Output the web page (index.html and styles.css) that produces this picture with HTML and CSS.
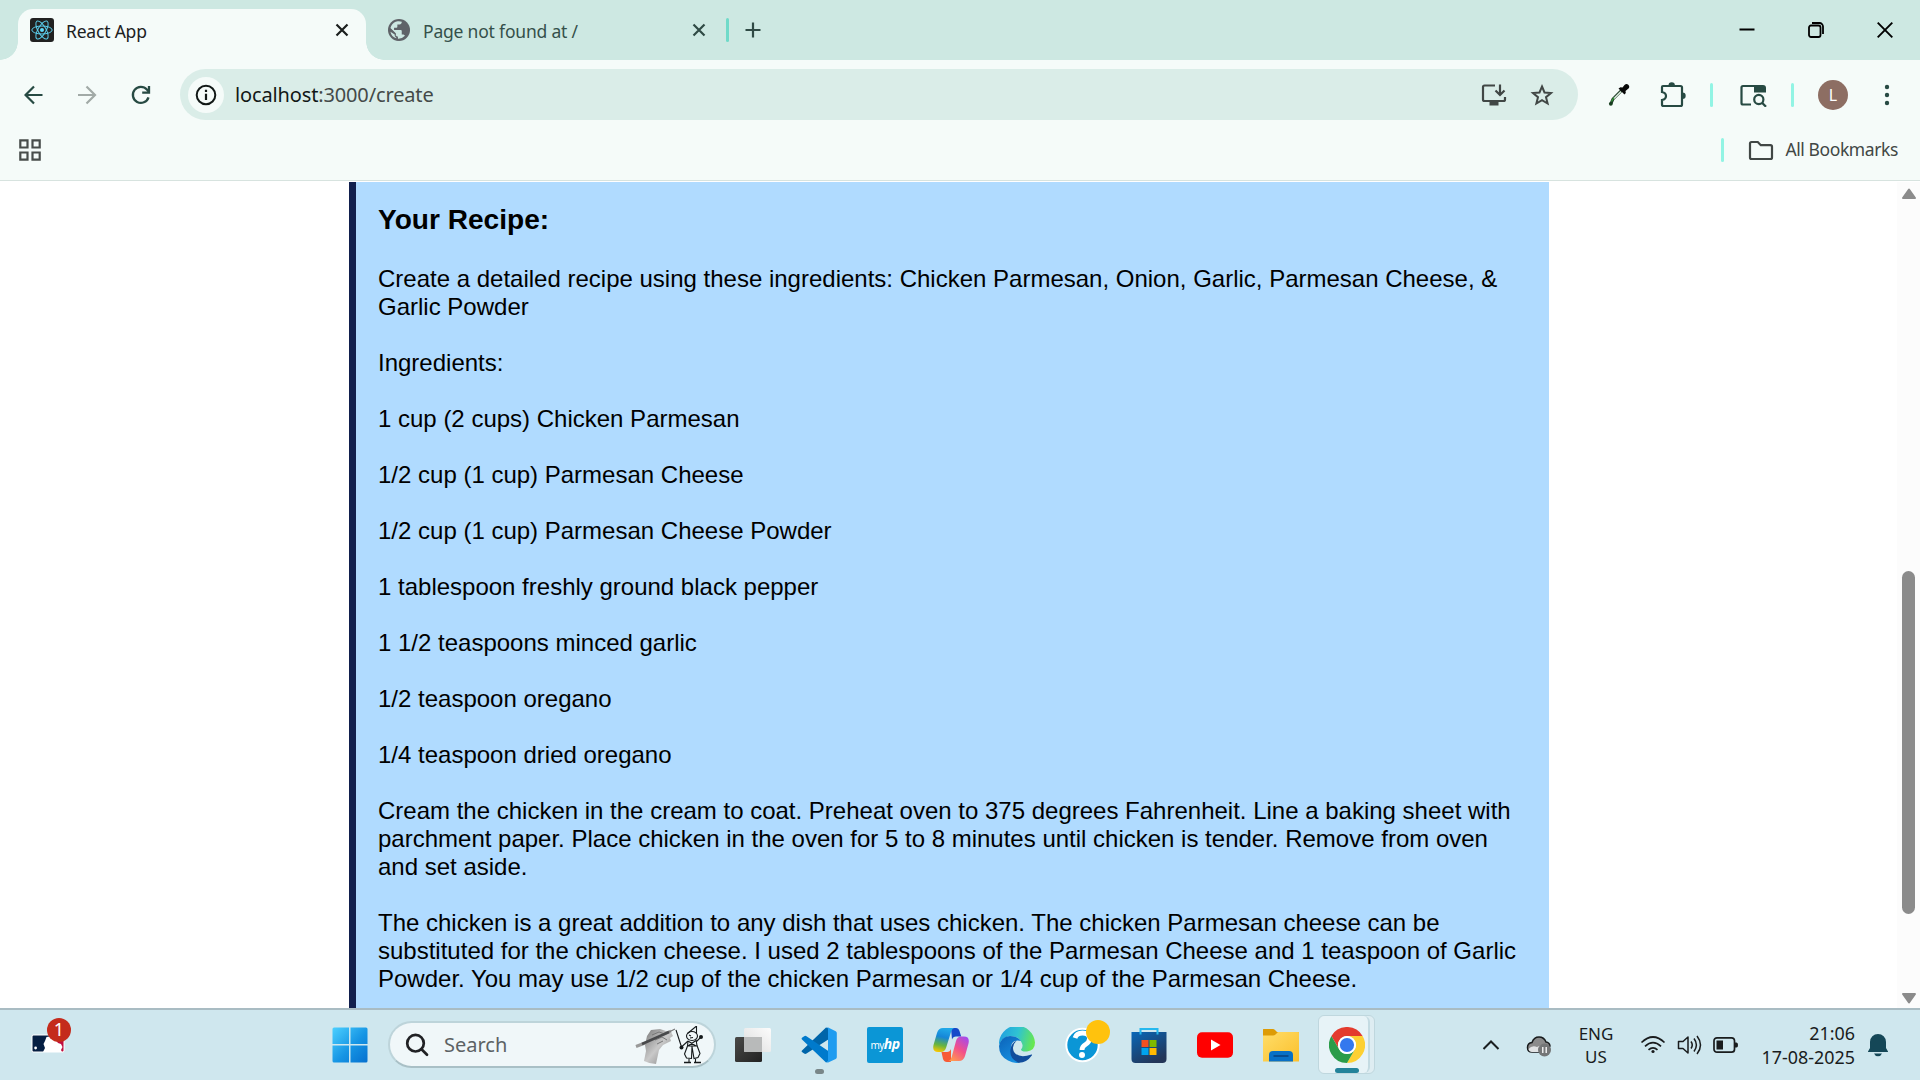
FILE: index.html
```html
<!DOCTYPE html>
<html lang="en">
<head>
<meta charset="utf-8">
<title>React App</title>
<link rel="stylesheet" href="styles.css">
</head>
<body>
<div class="screen">
  <header class="tabstrip">
    <div class="tab tab-active">
      <svg class="favicon" width="24" height="24" viewBox="0 0 24 24"><rect width="24" height="24" rx="3" fill="#212121"/><g fill="none" stroke="#5ccfee" stroke-width="1"><ellipse cx="12" cy="12" rx="10.2" ry="4"/><ellipse cx="12" cy="12" rx="10.2" ry="4" transform="rotate(60 12 12)"/><ellipse cx="12" cy="12" rx="10.2" ry="4" transform="rotate(120 12 12)"/></g><circle cx="12" cy="12" r="2" fill="#61dafb"/></svg>
      <span class="tab-title t-react">React App</span>
      <svg class="tab-close" width="14" height="14" viewBox="0 0 14 14"><path d="M1.500 1.500l11 11M12.500 1.500l-11 11" stroke="#1b1f1e" stroke-width="2.200"/></svg>
    </div>
    <div class="tab tab-idle">
      <svg class="favicon globe" width="22" height="22" viewBox="2 2 20 20"><circle cx="12" cy="12" r="10" fill="#5f6368"/><path fill="#cde8e2" d="M4 12.200l5 4.600v1c0 .8.700 1.500 1.500 1.500v.6A8 8 0 0 1 4 12.200z"/><path fill="#cde8e2" d="M4 12A8 8 0 0 1 14.500 4.400V5c0 1-.9 2-2 2h-2v2c0 .6-.4 1-1 1h-2v2h6c.6 0 1 .4 1 1v3h1c.9 0 1.600.5 1.900 1.300A8 8 0 0 1 11 20v-2c-1 0-2-.9-2-2v-1L4.200 10.200z"/><path fill="#5f6368" d="M3.200 9.800L9 15.400v1.600c0 1 .9 2 2 2v2.500A9.500 9.500 0 0 1 3.200 9.800z"/><path fill="#cde8e2" d="M4.200 13.500a8 8 0 0 0 5.300 6l-.1-.7c-.8-.4-1.300-1.200-1.300-2v-.6z"/></svg>
      <span class="tab-title t-page">Page not found at /</span>
      <svg class="tab-close" width="14" height="14" viewBox="0 0 14 14"><path d="M1.500 1.500l11 11M12.500 1.500l-11 11" stroke="#2f4a45" stroke-width="2.200"/></svg>
    </div>
    <i class="divider teal"></i>
    <svg class="plus" width="16" height="16" viewBox="0 0 16 16"><path d="M8 0.500v15M.5 8h15" stroke="#2f4a45" stroke-width="2.200"/></svg>
    <div class="window-controls">
      <svg width="16" height="16" viewBox="0 0 16 16"><path d="M.5 7.500h15" stroke="#000" stroke-width="2"/></svg>
      <svg width="16" height="16" viewBox="0 0 16 16" fill="none" stroke="#000" stroke-width="1.800"><rect x="1" y="3.500" width="11.500" height="11.500" rx="2"/><path d="M4 1h7.500a3.500 3.500 0 0 1 3.500 3.500V12"/></svg>
      <svg width="16" height="16" viewBox="0 0 16 16"><path d="M.7.700l14.600 14.600M15.300.700L.7 15.300" stroke="#000" stroke-width="1.900"/></svg>
    </div>
  </header>

  <div class="toolbar">
    <div class="nav">
      <svg width="20" height="20" viewBox="0 0 20 20" fill="none" stroke="#274a43" stroke-width="2.200"><path d="M18.500 10H1.500M10 1.500L1.500 10l8.500 8.500"/></svg>
      <svg width="20" height="20" viewBox="0 0 20 20" fill="none" stroke="#a2aaa7" stroke-width="2.200"><path d="M1 10h17M9.500 1.500L18 10l-8.500 8.500"/></svg>
      <svg width="20" height="20" viewBox="0 0 20 20" fill="none" stroke="#274a43" stroke-width="2.300"><path d="M17.500 12.300A8 8 0 1 1 15.900 4.600L18 7"/><path d="M18 1v6.600h-6.800"/></svg>
    </div>
    <div class="omnibox">
      <div class="site-info"><svg width="22" height="22" viewBox="0 0 22 22"><circle cx="11" cy="11" r="9.300" fill="none" stroke="#111816" stroke-width="2"/><path d="M11 9.700v6.300M11 5.700v2.200" stroke="#111816" stroke-width="2.200"/></svg></div>
      <span class="url"><b>localhost</b>:3000/create</span>
      <svg class="install" width="26" height="24" viewBox="0 0 26 24" fill="none" stroke="#414745" stroke-width="2.200"><path d="M14 2.500H3.500a1.500 1.500 0 0 0-1.500 1.500v12.500A1.500 1.500 0 0 0 3.500 18h19a1.500 1.500 0 0 0 1.500-1.500V14M19 1.500V12M14.500 7.500L19 12l4.500-4.500"/><path d="M8.500 20.500h9" stroke-width="4"/></svg>
      <svg class="star" width="24" height="24" viewBox="0 0 24 24"><path d="M12 3.500l2.500 6 6.500.5-5 4.200 1.600 6.300L12 17.100l-5.600 3.400L8 14.200 3 10l6.500-.5z" fill="none" stroke="#414745" stroke-width="2"/></svg>
    </div>
    <div class="extensions">
      <svg width="22" height="24" viewBox="0 0 22 24"><path d="M14 7L5 16 2.800 21" stroke="#1d3a25" stroke-width="3" fill="none"/><path d="M13 8.500L6 15.500" stroke="#d8eadb" stroke-width="1.600"/><path d="M10.500 5.500l2-1.200 2 .3 2-2.600q2-1.800 3.800-.2t.2 3.800L17.500 8l.3 2-1.300 1.500z" fill="#080908"/><circle cx="2.800" cy="20.800" r="1.900" fill="#173e1f"/><path d="M6 14.500l-2.500 4" stroke="#39a13e" stroke-width="1.200"/></svg>
      <svg width="26" height="26" viewBox="0 0 26 26"><path d="M3 4h17.500A1.500 1.500 0 0 1 22 5.500v17a1.500 1.500 0 0 1-1.500 1.500h-17A1.500 1.500 0 0 1 2 22.500V18q4-.8 4-4t-4-4V5a1 1 0 0 1 1-1z" fill="none" stroke="#274a43" stroke-width="2.200"/><path d="M8.500 3.500a3.200 3.200 0 0 1 6.400 0zM22.500 10.500a3.200 3.200 0 0 1 0 6.400z" fill="#274a43"/></svg>
      <i class="divider mint"></i>
      <svg width="28" height="24" viewBox="0 0 28 24"><path d="M12 21.500H4a1.500 1.500 0 0 1-1.500-1.500V4.500A1.500 1.500 0 0 1 4 3h20" fill="none" stroke="#274a43" stroke-width="2.200"/><path d="M15 2h9a3 3 0 0 1 3 3v4.500H15z" fill="#274a43"/><circle cx="19.800" cy="16.500" r="4.600" fill="none" stroke="#274a43" stroke-width="2.200"/><path d="M23 19.700l4 4" stroke="#274a43" stroke-width="2.300"/></svg>
      <i class="divider mint"></i>
      <span class="avatar">L</span>
      <svg width="6" height="24" viewBox="0 0 6 24" fill="#274a43"><circle cx="3" cy="4" r="2.200"/><circle cx="3" cy="12" r="2.200"/><circle cx="3" cy="20" r="2.200"/></svg>
    </div>
  </div>

  <div class="bookmarks">
    <svg width="24" height="24" viewBox="0 0 24 24" fill="none" stroke="#484d4b" stroke-width="2.200"><path d="M2.300 2.300h7.200v7.200H2.300zM14.500 2.300h7.200v7.200h-7.200zM2.300 14.500h7.200v7.200H2.300zM14.500 14.500h7.200v7.200h-7.200z"/></svg>
    <div class="all-bookmarks">
      <i class="divider mint"></i>
      <svg width="26" height="22" viewBox="0 0 26 22"><path d="M3.500 3h6.300l3 3.200h9.700A1.500 1.500 0 0 1 24 7.700v10.800a1.500 1.500 0 0 1-1.500 1.500h-19A1.500 1.500 0 0 1 2 18.500v-14A1.500 1.500 0 0 1 3.500 3z" fill="none" stroke="#414745" stroke-width="2.200"/></svg>
      <span class="t-bookmarks">All Bookmarks</span>
    </div>
  </div>

  <div class="viewport">
    <main class="recipe">
      <h3>Your Recipe:</h3>
      <p>Create a detailed recipe using these ingredients: Chicken Parmesan, Onion, Garlic, Parmesan Cheese, &amp; Garlic Powder</p>
      <p>Ingredients:</p>
      <p>1 cup (2 cups) Chicken Parmesan</p>
      <p>1/2 cup (1 cup) Parmesan Cheese</p>
      <p>1/2 cup (1 cup) Parmesan Cheese Powder</p>
      <p>1 tablespoon freshly ground black pepper</p>
      <p>1 1/2 teaspoons minced garlic</p>
      <p>1/2 teaspoon oregano</p>
      <p>1/4 teaspoon dried oregano</p>
      <p>Cream the chicken in the cream to coat. Preheat oven to 375 degrees Fahrenheit. Line a baking sheet with parchment paper. Place chicken in the oven for 5 to 8 minutes until chicken is tender. Remove from oven and set aside.</p>
      <p>The chicken is a great addition to any dish that uses chicken. The chicken Parmesan cheese can be substituted for the chicken cheese. I used 2 tablespoons of the Parmesan Cheese and 1 teaspoon of Garlic Powder. You may use 1/2 cup of the chicken Parmesan or 1/4 cup of the Parmesan Cheese.</p>
    </main>
    <div class="scrollbar">
      <svg width="16" height="12" viewBox="0 0 16 12"><path d="M8 1.500L14 10H2z" fill="#8b8b8b" stroke="#8b8b8b" stroke-width="2" stroke-linejoin="round"/></svg>
      <i class="thumb"></i>
      <svg class="arrow-down" width="16" height="12" viewBox="0 0 16 12"><path d="M8 10.500L14 2H2z" fill="#8b8b8b" stroke="#8b8b8b" stroke-width="2" stroke-linejoin="round"/></svg>
    </div>
  </div>

  <footer class="taskbar">
    <div class="widget">
      <svg width="34" height="19" viewBox="0 0 34 19"><rect x=".5" y=".5" width="33" height="18" rx="2" fill="#fff"/><path d="M1.500 2.500a1 1 0 0 1 1-1H18v16H2.500a1 1 0 0 1-1-1z" fill="#041e42"/><path d="M18 1.500h13.500a1 1 0 0 1 1 1v14a1 1 0 0 1-1 1H18z" fill="#bf0d3e"/><path d="M12 18l2-4-1.500-4 1.500-3 1.500-4 3-.5L20 5l3-1 4 5 3 1 1.500 3-1.500 3 1 2z" fill="#fff"/><circle cx="4.600" cy="14" r="1.400" fill="#fff"/></svg>
      <span class="badge">1</span>
    </div>
    <div class="apps">
      <svg width="36" height="36" viewBox="0 0 36 36"><defs><linearGradient id="win" x1="0" y1="0" x2="1" y2="1"><stop offset="0" stop-color="#4cd0ff"/><stop offset=".55" stop-color="#1695e4"/><stop offset="1" stop-color="#0670cf"/></linearGradient></defs><path fill="url(#win)" d="M2 .5h15v16.500H.5V2A1.500 1.500 0 0 1 2 .5zM18.500.5H34A1.500 1.500 0 0 1 35.500 2v15h-17zM.5 18.500H17v17H2A1.500 1.500 0 0 1 .5 34zM18.500 18.500h17V34a1.500 1.500 0 0 1-1.500 1.500H18.500z"/></svg>
      <div class="search">
        <svg width="24" height="24" viewBox="0 0 24 24" fill="none" stroke="#202124" stroke-width="2.700" stroke-linecap="round"><circle cx="10.500" cy="10.200" r="8.300"/><path d="M16.500 16.200l5.500 5.500"/></svg>
        <span class="t-search">Search</span>
        <svg class="art" width="70" height="38" viewBox="0 0 70 38"><defs><linearGradient id="hand" x1="0" y1="0" x2="1" y2="1"><stop offset="0" stop-color="#777"/><stop offset=".5" stop-color="#c9c9c9"/><stop offset="1" stop-color="#777"/></linearGradient></defs><path d="M9 35l2-10-1-6 2-9 4-6 9-1 6 2 5 1 2 4-3 2 1 3-4 2-4 2-4 5-3 14q-6 0-12-3z" fill="url(#hand)"/><path d="M17 9l7-3 6 2M20 14l7-3 5 3M22 18l6-3" stroke="#777" stroke-width="1" fill="none"/><path d="M1 20.500L10 17M27 9l9-4" stroke="#999" stroke-width="3"/><path d="M7 18L34 6" stroke="#48494b" stroke-width="2.600"/><path d="M34 6l6-3" stroke="#777" stroke-width="1.200"/><g fill="none" stroke="#15191b" stroke-width="1.100"><path d="M41 4l5.500 17 6.500-6M61 16l5-5M52.500 7.500l9-7.500v8"/><ellipse cx="57" cy="10" rx="5.500" ry="4.500"/><path d="M54 9l2 1M55 12l3-.5M53 15l8 5M61 14.500l-8 5.500M52 20h10M53 15l-.5 5-3 8 2 4 5 .5.500-12 2 12 4-1 2-4-3-8-1-6M54 33v3M60.500 33v3"/></g><circle cx="46.500" cy="21.500" r="2" fill="#15191b"/><circle cx="66" cy="11" r="2" fill="#15191b"/><path d="M49 36.500h7M59 36.500h7" stroke="#15191b" stroke-width="1.300"/></svg>
      </div>
      <svg class="app" width="36" height="36" viewBox="0 0 36 36"><defs><linearGradient id="tv" x1="0" y1="0" x2="1" y2="1"><stop offset="0" stop-color="#494947"/><stop offset="1" stop-color="#222"/></linearGradient><linearGradient id="tw" x1="0" y1="1" x2="1" y2="0"><stop offset="0" stop-color="#dcdddd"/><stop offset="1" stop-color="#fcfcfc"/></linearGradient></defs><rect x="0" y="10" width="27" height="25" rx="1.500" fill="url(#tv)"/><rect x="9" y="1" width="27" height="24" rx="1.500" fill="url(#tw)"/><path d="M9 10h18v15H10a1 1 0 0 1-1-1z" fill="#b8baba"/></svg>
      <div class="app running">
        <svg width="36" height="36" viewBox="0 0 36 36"><path d="M1 23.500L25 .5l3 1v10.500L5.500 26.500q-1.200.8-2.400 0L1 25q-1-.8 0-1.500z" fill="#0065a9" /><path d="M1 12.500q-1-.8 0-1.700l2.200-1.600q1.200-.8 2.300 0L28 24.500V34l-3 1.500z" fill="#007acc"/><path d="M25 35.500q1 .5 2.200 0l7.500-3.500q1.100-.5 1.100-1.800V6q0-1.300-1.100-1.800L27.200.500Q26 0 25 .700q2-.6 2 1.300v32q0 2-2 1.500z" fill="#1f9cf0"/></svg>
        <i class="run-dot"></i>
      </div>
      <span class="app myhp">my<b>hp</b></span>
      <svg class="app" width="36" height="36" viewBox="0 0 36 36"><defs><linearGradient id="ca" x1=".4" y1="0" x2=".2" y2="1"><stop offset="0" stop-color="#20a8e8"/><stop offset=".35" stop-color="#1686d8"/><stop offset=".7" stop-color="#67b53f"/><stop offset="1" stop-color="#ffc800"/></linearGradient><linearGradient id="cb" x1=".8" y1="0" x2=".2" y2="1"><stop offset="0" stop-color="#a64bea"/><stop offset=".5" stop-color="#f3508a"/><stop offset="1" stop-color="#ff9b4e"/></linearGradient></defs><path d="M18 1h5q2.500 0 3.500 3l1.700 5.500H23q-3 0-4 3z" fill="#1648c9"/><path d="M18 35h-4q-3 0-4-3l-1.500-7H14q3 0 4-3z" fill="#f75a35"/><path d="M10 1h11q-2.200 1-3 4l-5 16q-1.400 4-5 4H5Q-1 25 .5 18L4 6q1.500-5 6-5z" fill="url(#ca)"/><path d="M26 34H15.500q2.500-1 3.200-4L23 14q1.200-4.500 5-4.500h3q6 0 4.500 7L32 29q-1.500 5-6 5z" fill="url(#cb)"/></svg>
      <svg class="app" width="36" height="36" viewBox="0 0 36 36"><defs><linearGradient id="ea" x1="0" y1=".3" x2="1" y2=".5"><stop offset="0" stop-color="#219fe0"/><stop offset=".5" stop-color="#2fc3d2"/><stop offset="1" stop-color="#68e84e"/></linearGradient><linearGradient id="eb" x1="0" y1="0" x2=".6" y2="1"><stop offset="0" stop-color="#0b62b8"/><stop offset="1" stop-color="#178fe0"/></linearGradient></defs><path d="M0 18A18 18 0 0 1 36 15.500q0 8-8 9-5.500.5-6-2 2.500-3 1-6Q20 9 11 9 3 10 0 18z" fill="url(#ea)"/><path d="M0 19Q2 9.500 11 9q8 0 11 5-9-2-10 6-1 11 9 15.500Q15 37 9 33.500 0 29 0 19z" fill="url(#eb)"/><path d="M17.500 13.800Q12 19 15 25q5 7 17.500 2.500 1-.3.300 1-5.300 7.500-13.300 7.200Q10 32 11.500 22q1-6 6-8.200z" fill="#114d9c"/></svg>
      <div class="app help">
        <svg width="36" height="36" viewBox="0 0 36 36"><circle cx="17.500" cy="18" r="16.200" fill="#0b96d6" stroke="#fff" stroke-width="2"/><path d="M10 11q1.500-5 7.500-5 7 0 7 5.500 0 3.500-4 6-3.500 2-3.500 5.500" fill="none" stroke="#fff" stroke-width="4.800"/><circle cx="17" cy="28" r="3" fill="#fff"/></svg>
        <i class="notice"></i>
      </div>
      <svg class="app" width="36" height="36" viewBox="0 0 36 36"><defs><linearGradient id="st" x1="0" y1="0" x2=".6" y2="1"><stop offset="0" stop-color="#0867b8"/><stop offset="1" stop-color="#233658"/></linearGradient></defs><path d="M.5 5H35.500v27a4 4 0 0 1-4 4H4.500a4 4 0 0 1-4-4z" fill="url(#st)"/><path d="M9.500 7.500V2h17v5.500" fill="none" stroke="#25b8ee" stroke-width="2"/><path d="M10.500 13h7v7h-7z" fill="#f25022"/><path d="M18.500 13h7v7h-7z" fill="#7fba00"/><path d="M10.500 21h7v7h-7z" fill="#00a4ef"/><path d="M18.500 21h7v7h-7z" fill="#ffb900"/></svg>
      <svg class="app" width="36" height="36" viewBox="0 0 36 36"><rect y="5.300" width="36" height="25.400" rx="5" fill="#f00"/><path d="M14 12.500v11L23.500 18z" fill="#fff"/></svg>
      <svg class="app" width="36" height="36" viewBox="0 0 36 36"><defs><linearGradient id="fo" x1="0" y1="0" x2="1" y2="1"><stop offset="0" stop-color="#ffdd69"/><stop offset="1" stop-color="#fbc02c"/></linearGradient></defs><path d="M0 2.500Q0 2 .5 2H10q1 0 2 1l2 2h22v8H0z" fill="#dd9b05"/><path d="M0 8.500h10q1.500 0 2.500-1L15 5h20.500q.5 0 .5.500v29H0z" fill="url(#fo)"/><path d="M6 34.500v-6.500q0-4 4-4h16q4 0 4 4v6.500z" fill="#0870c6"/><path d="M10.500 29h15" stroke="#07417e" stroke-width="1.500"/></svg>
      <div class="chrome-stack"><div class="chrome-tile">
        <svg width="36" height="36" viewBox="0 0 36 36"><path d="M2.400 9A18 18 0 0 1 33.600 9H18a9 9 0 0 0-7.800 13.500z" fill="#e33b2e"/><path d="M33.600 9A18 18 0 0 1 18 36l7.800-13.500A9 9 0 0 0 18 9z" fill="#fdd032"/><path d="M2.400 9A18 18 0 0 0 18 36l7.800-13.500a9 9 0 0 1-15.600 0z" fill="#2a9c49"/><circle cx="18" cy="18" r="9" fill="#fff"/><circle cx="18" cy="18" r="7.100" fill="#3478ee"/></svg>
        <i class="active-bar"></i>
      </div></div>
    </div>
    <div class="tray">
      <svg class="chevron" width="18" height="12" viewBox="0 0 18 12"><path d="M1.500 10L9 2.500l7.500 7.500" fill="none" stroke="#1a1f21" stroke-width="2"/></svg>
      <svg class="cloud" width="26" height="22" viewBox="0 0 26 22"><path d="M6 17q-4.500 0-4.500-4.500T6 7.500Q8 2 13 2t7 5q3.500.5 4 4L18 17z" fill="#8b8b8b" stroke="#171a1b" stroke-width="1.500"/><path d="M2.500 14Q6 10 11 12l7-3v8H6q-3 0-3.500-3z" fill="#e1e3e4"/><circle cx="18.500" cy="15" r="6.500" fill="#747677"/><path d="M16.800 12v6M20.200 12v6" stroke="#fff" stroke-width="1.300"/></svg>
      <span class="lang"><span>ENG</span><span>US</span></span>
      <svg class="wifi" width="26" height="20" viewBox="0 0 26 20" fill="none" stroke="#191c1d" stroke-width="1.700"><path d="M1.500 7.500q11.500-11 23 0M5 11.300q8-7.500 16 0M8.500 14.800q4.500-4 9 0"/><circle cx="13" cy="16.500" r="1.600" fill="#191c1d" stroke="none"/></svg>
      <svg class="volume" width="26" height="22" viewBox="0 0 26 22" fill="none" stroke="#191c1d" stroke-width="1.500"><path d="M1.500 7.500H6L11 3v16l-5-4.500H1.500zM14 7.500q2.500 3.500 0 7M17 4.500q4.800 6.500 0 13M20 2q7 9 0 18" stroke-linejoin="round"/></svg>
      <svg class="battery" width="26" height="18" viewBox="0 0 26 18"><rect x="1" y="1.800" width="20.500" height="14.400" rx="3" fill="none" stroke="#191c1d" stroke-width="1.700"/><path d="M3.500 4.500H10v9H3.500z" fill="#191c1d"/><path d="M22 6.500h1.500q1.500 0 1.500 2.500t-1.500 2.500H22z" fill="#191c1d"/></svg>
      <span class="clock"><span>21:06</span><span>17-08-2025</span></span>
      <svg class="bell" width="22" height="24" viewBox="0 0 22 24"><path d="M11 1a8 8 0 0 1 8 8v6l2 3.500V19H1v-.5L3 15V9a8 8 0 0 1 8-8zM7 20.500h8a4.300 4.300 0 0 1-8 0z" fill="#154757"/></svg>
    </div>
  </footer>
</div>
</body>
</html>
```
FILE: styles.css
```css
* { box-sizing: border-box; }
body { margin: 0; overflow: hidden; }
svg { display: block; flex: none; }
i { display: block; flex: none; }
.screen { width: 1920px; height: 1080px; display: flex; flex-direction: column; background: #fff; font-family: "Noto Sans", "Open Sans", sans-serif; }

.tabstrip { height: 60px; background: #cde8e2; display: flex; align-items: flex-end; padding-left: 18px; }
.tab { height: 51px; display: flex; align-items: center; padding-bottom: 9px; }
.tab-active { position: relative; width: 348px; background: #f5fbf9; border-radius: 15px 15px 0 0; padding-left: 12px; padding-right: 17px; }
.tab-active::before, .tab-active::after { content: ""; position: absolute; bottom: 0; width: 18px; height: 18px; }
.tab-active::before { left: -18px; background: radial-gradient(circle at 0 0, #cde8e2 17.500px, #f5fbf9 18px); }
.tab-active::after { right: -18px; background: radial-gradient(circle at 100% 0, #cde8e2 17.500px, #f5fbf9 18px); }
.tab-idle { width: 359px; padding-left: 22px; padding-right: 19px; }
.tab-title { margin-left: 12px; font-size: 17.500px; line-height: 24px; color: #1c211f; white-space: nowrap; padding-top: 1px; letter-spacing: -.2px; }
.tab-idle .tab-title { color: #35504a; margin-left: 13px; }
.tab-close { margin-left: auto; }
.divider { width: 3px; height: 24px; border-radius: 2px; }
.teal { background: #70dac9; margin: 0 0 18px 1px; }
.mint { background: #92f4e4; }
.plus { margin: 0 0 22px 16px; }
.window-controls { display: flex; gap: 53px; margin: 0 27px 22px auto; }

.toolbar { height: 69px; background: #f5fbf9; display: flex; align-items: center; padding: 0 30px 0 24px; flex: none; }
.nav { display: flex; gap: 33px; width: 156px; }
.nav > :last-child { margin-left: 1px; }
.omnibox { width: 1398px; height: 51px; border-radius: 26px; background: #daede8; display: flex; align-items: center; padding: 0 24px 0 8px; }
.site-info { width: 36px; height: 36px; border-radius: 50%; background: #f5fbf9; display: grid; place-items: center; }
.url { margin-left: 11px; font-size: 20px; line-height: 30px; color: #444a48; letter-spacing: -.14px; }
.url b { font-weight: 400; color: #121816; }
.install { margin-left: auto; }
.star { margin-left: 23px; }
.extensions { display: flex; align-items: center; margin-left: auto; }
.extensions > :nth-child(2) { margin-left: 30px; }
.extensions > :nth-child(3) { margin-left: 24px; }
.extensions > :nth-child(4) { margin-left: 26px; }
.extensions > :nth-child(5) { margin-left: 24px; }
.extensions > :nth-child(6) { margin-left: 24px; }
.extensions > :nth-child(7) { margin-left: 36px; }
.avatar { width: 30px; height: 30px; border-radius: 50%; background: #8d6e63; color: #fff; font-size: 16px; line-height: 30px; text-align: center; }

.bookmarks { height: 52px; flex: none; background: #f5fbf9; border-bottom: 1px solid #d7e3df; display: flex; justify-content: space-between; align-items: flex-start; padding: 9px 22px 0 18px; }
.all-bookmarks { display: flex; align-items: center; }
.all-bookmarks svg { margin-left: 24px; }
.t-bookmarks { margin-left: 11px; margin-top: -2px; font-size: 17.500px; line-height: 24px; color: #414745; letter-spacing: -.4px; }

.viewport { height: 826px; margin-top: 1px; flex: none; display: flex; justify-content: space-between; overflow: hidden; }
.recipe { margin-left: 349px; width: 1200px; height: 860px; border-left: 7px solid #111f4d; background: #b0dbff; color: #000; padding: 22px 22px 0; font: 24px/28px "Liberation Sans", Arial, sans-serif; }
.recipe h3 { margin: 0 0 29px; font-size: 28.080px; line-height: 32px; }
.recipe p { margin: 0 0 28px; }
.scrollbar { width: 23px; background: #fcfcfc; display: flex; flex-direction: column; align-items: center; padding: 6px 0 4px; }
.thumb { width: 13px; height: 343px; border-radius: 7px; background: #8b8b8b; margin-top: 371px; }
.arrow-down { margin-top: auto; }

.taskbar { height: 72px; border-top: 2px solid #a9bcc3; background: #cfe7ee; display: flex; align-items: center; flex: none; }
.widget { position: relative; width: 34px; margin: 0 0 4px 31px; }
.badge { position: absolute; left: 16px; top: -16px; width: 24px; height: 24px; border-radius: 50%; background: #c42b1c; color: #fff; font-size: 18px; line-height: 23px; text-align: center; }
.apps { display: flex; align-items: center; margin-left: 267px; width: 1044px; }
.search { width: 328px; height: 47px; margin: 0 0 1px 20px; border: 2px solid #bdd4da; border-bottom-color: #a9c0c6; border-radius: 24px; background: #f0f7f9; display: flex; align-items: center; padding: 0 9px 0 15px; }
.t-search { margin-left: 15px; font-size: 20px; line-height: 28px; color: #5c6264; }
.art { margin-left: auto; }
.app { margin: 0 0 1px 30px; flex: none; }
.search + .app { margin-left: 19px; }
.running, .help { position: relative; }
.run-dot { position: absolute; left: 14px; bottom: -11px; width: 9px; height: 5px; border-radius: 3px; background: #798688; }
.myhp { width: 36px; height: 36px; border-radius: 2px; background: #0b96d6; color: #fff; font: 10px/34px "Noto Sans", sans-serif; text-align: center; letter-spacing: -.5px; }
.myhp b { font-size: 14px; font-style: italic; }
.notice { position: absolute; right: -9px; top: -7px; width: 24px; height: 24px; border-radius: 50%; background: #ffc20d; }
.chrome-stack { width: 57px; height: 59px; margin: 0 0 1px 19px; flex: none; border: 1px solid #bfd7de; border-radius: 6px; background: #deedf2; }
.chrome-tile { position: relative; width: 51px; height: 57px; border-right: 2px solid #c4dbe2; border-radius: 6px; background: #e7f3f7; display: grid; place-items: center; padding-left: 7px; }
.active-bar { position: absolute; left: 16px; bottom: 0; width: 24px; height: 5px; border-radius: 3px; background: #23839a; }
.tray { display: flex; align-items: center; margin-left: auto; margin: 0 31px 1px auto; color: #191c1d; }
.cloud { margin: 3px 0 0 26px; }
.lang { width: 42px; margin-left: 23px; display: flex; flex-direction: column; font-size: 17px; line-height: 23px; text-align: center; }
.wifi { margin-left: 23px; }
.volume { margin-left: 11px; }
.battery { margin-left: 10px; }
.clock { width: 110px; margin-left: 6px; display: flex; flex-direction: column; font-size: 17.900px; line-height: 24px; text-align: right; }
.bell { margin-left: 12px; }
```
